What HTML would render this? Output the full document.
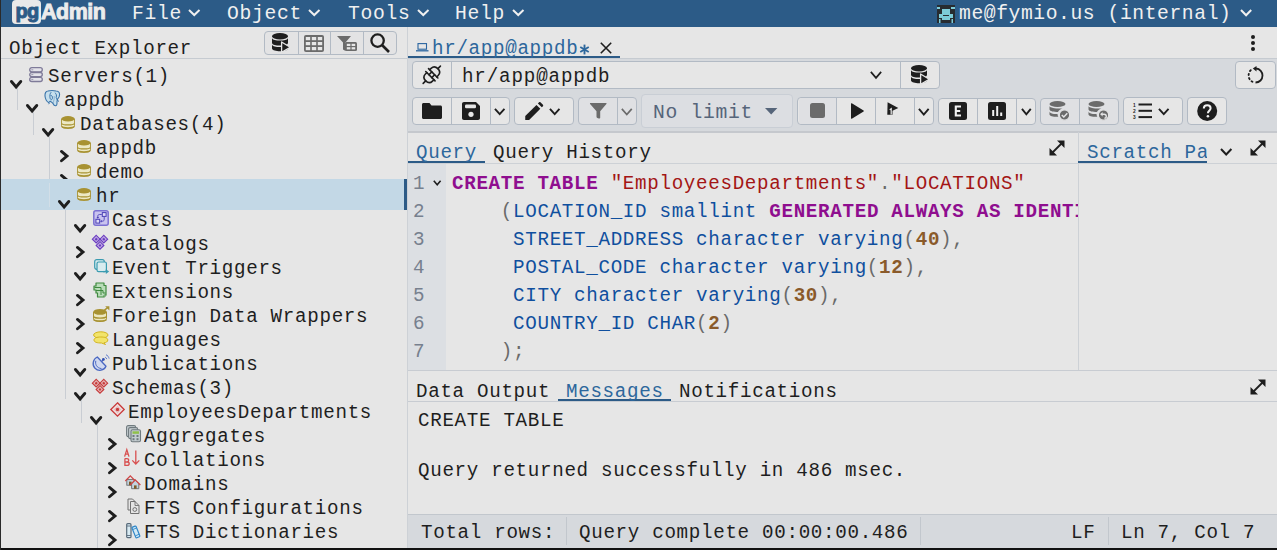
<!DOCTYPE html>
<html><head><meta charset="utf-8"><style>
html,body{margin:0;padding:0;}
body{width:1277px;height:550px;overflow:hidden;position:relative;background:#111;font-family:"Liberation Mono",monospace;}
.a{position:absolute;}
.t{position:absolute;font-family:"Liberation Mono",monospace;font-size:20.5px;letter-spacing:0.72px;white-space:pre;height:24px;line-height:24px;color:#1e1e1e;transform-origin:0 0;transform:scaleX(0.937);}
.bg{position:absolute;border:1px solid #b2bac4;border-radius:4px;background:#e3e3e4;box-sizing:border-box;}
.dv{position:absolute;top:0;bottom:0;width:1px;background:#b2bac4;}
svg{position:absolute;overflow:visible;}
</style></head><body>
<div class="a" style="left:1px;top:0px;width:1276px;height:27px;background:#2c5b87;"></div>
<div class="a" style="left:12px;top:-0.5px;width:29px;height:24.2px;background:#e9e9e9;border-radius:4px;"></div>
<div class="a" style="left:15.6px;top:-1.5px;font-family:'Liberation Sans',sans-serif;font-weight:bold;font-size:20px;line-height:24px;color:#2c5b87;letter-spacing:-0.9px;-webkit-text-stroke:1px #2c5b87;">pg</div>
<div class="a" style="left:41px;top:0px;font-family:'Liberation Sans',sans-serif;font-weight:bold;font-size:21.5px;line-height:24px;color:#ececec;letter-spacing:-0.5px;-webkit-text-stroke:0.9px #ececec;">Admin</div>
<div class="t" style="left:131.60px;top:2.00px;font-size:21px;letter-spacing:0.740px;top:1.87px;color:#f0f0f0;">File</div>
<svg style="left:188px;top:9px" width="12.5" height="7"><path d="M1.0 1.0 L6.25 6.0 L11.5 1.0" fill="none" stroke="#f0f0f0" stroke-width="2" stroke-linecap="butt" stroke-linejoin="miter"/></svg>
<div class="t" style="left:227.00px;top:2.00px;font-size:21px;letter-spacing:0.740px;top:1.87px;color:#f0f0f0;">Object</div>
<svg style="left:308px;top:9px" width="12.5" height="7"><path d="M1.0 1.0 L6.25 6.0 L11.5 1.0" fill="none" stroke="#f0f0f0" stroke-width="2" stroke-linecap="butt" stroke-linejoin="miter"/></svg>
<div class="t" style="left:347.60px;top:2.00px;font-size:21px;letter-spacing:0.740px;top:1.87px;color:#f0f0f0;">Tools</div>
<svg style="left:416.5px;top:9px" width="12.5" height="7"><path d="M1.0 1.0 L6.25 6.0 L11.5 1.0" fill="none" stroke="#f0f0f0" stroke-width="2" stroke-linecap="butt" stroke-linejoin="miter"/></svg>
<div class="t" style="left:454.50px;top:2.00px;font-size:21px;letter-spacing:0.740px;top:1.87px;color:#f0f0f0;">Help</div>
<svg style="left:511.5px;top:9px" width="12.5" height="7"><path d="M1.0 1.0 L6.25 6.0 L11.5 1.0" fill="none" stroke="#f0f0f0" stroke-width="2" stroke-linecap="butt" stroke-linejoin="miter"/></svg>
<svg style="left:937px;top:5px" width="18" height="18"><rect width="18" height="18" fill="#272c31"/><rect x="0" y="2" width="3" height="2" fill="#7ccbd8"/><rect x="14" y="2" width="4" height="2" fill="#7ccbd8"/><rect x="5" y="4" width="8" height="6" fill="#7ccbd8"/><rect x="2" y="9" width="14" height="4" fill="#7ccbd8"/><rect x="5" y="13" width="8" height="2" fill="#7ccbd8"/><rect x="2" y="14" width="1.5" height="4" fill="#7ccbd8"/><rect x="14.5" y="14" width="1.5" height="4" fill="#7ccbd8"/><rect x="6" y="10" width="6" height="1" fill="#272c31"/></svg>
<div class="t" style="left:958.50px;top:2.00px;font-size:21px;letter-spacing:0.612px;top:1.87px;color:#f0f0f0;">me@fymio.us (internal)</div>
<svg style="left:1239.5px;top:9.3px" width="12.2" height="7.2"><path d="M1.0 1.0 L6.1 6.2 L11.2 1.0" fill="none" stroke="#f0f0f0" stroke-width="2" stroke-linecap="butt" stroke-linejoin="miter"/></svg>
<div class="a" style="left:1px;top:27px;width:406px;height:521px;background:#e6e6e6;"></div>
<div class="a" style="left:407px;top:27px;width:1px;height:521px;background:#cdd1d6;"></div>
<div class="a" style="left:1px;top:58px;width:406px;height:1px;background:#c6cbd1;"></div>
<div class="t" style="left:9.00px;top:36.60px;">Object Explorer</div>
<div class="bg" style="left:264px;top:31px;width:133px;height:24px;"><div class="dv" style="left:32.5px"></div><div class="dv" style="left:65px"></div><div class="dv" style="left:98px"></div></div>
<svg style="left:271.7px;top:33.4px" width="19" height="20" viewBox="0 0 19 20"><ellipse cx="8" cy="3.2" rx="8" ry="3.2" fill="#1e1e1e"/><path d="M0 5 C0.6 6.9 4 7.6 8 7.6 C12 7.6 15.4 6.9 16 5 V10 C15.4 11.9 12 12.6 8 12.6 C4 12.6 0.6 11.9 0 10 Z" fill="#1e1e1e"/><path d="M0 11.4 C0.6 13.3 4 14 8 14 C12 14 15.4 13.3 16 11.4 V15.6 C15.4 17.5 12 18.3 8 18.3 C4 18.3 0.6 17.5 0 15.6 Z" fill="#1e1e1e"/><path d="M9.6 9 L18.2 14.2 L9.6 19.4 Z" fill="#1e1e1e" stroke="#e6e6e6" stroke-width="1.3" stroke-linejoin="round"/></svg>
<svg style="left:304px;top:35px" width="20" height="17" viewBox="0 0 20 17"><rect x="0" y="0" width="20" height="17" rx="2" fill="#6b6b6b"/><rect x="1.8" y="2" width="4.4" height="3.2" fill="#e6e6e6"/><rect x="7.8" y="2" width="4.4" height="3.2" fill="#e6e6e6"/><rect x="13.8" y="2" width="4.4" height="3.2" fill="#e6e6e6"/><rect x="1.8" y="7" width="4.4" height="3.2" fill="#e6e6e6"/><rect x="7.8" y="7" width="4.4" height="3.2" fill="#e6e6e6"/><rect x="13.8" y="7" width="4.4" height="3.2" fill="#e6e6e6"/><rect x="1.8" y="12" width="4.4" height="3.2" fill="#e6e6e6"/><rect x="7.8" y="12" width="4.4" height="3.2" fill="#e6e6e6"/><rect x="13.8" y="12" width="4.4" height="3.2" fill="#e6e6e6"/></svg>
<svg style="left:337.1px;top:35.6px" width="20" height="15" viewBox="0 0 20 15"><path d="M0 0 H14 L8.5 6.5 V15 L6 13.5 V6.5 Z" fill="#6b6b6b"/><rect x="8" y="6" width="12" height="9" rx="1.5" fill="#6b6b6b"/><g fill="#e6e6e6"><rect x="9.8" y="7.8" width="3.6" height="2.2"/><rect x="14.6" y="7.8" width="3.6" height="2.2"/><rect x="9.8" y="11.2" width="3.6" height="2.2"/><rect x="14.6" y="11.2" width="3.6" height="2.2"/></g></svg>
<svg style="left:369.6px;top:32.9px" width="20" height="20" viewBox="0 0 20 20"><circle cx="7.6" cy="7.6" r="6.2" fill="none" stroke="#1e1e1e" stroke-width="2.3"/><path d="M12 12 L19 19" stroke="#1e1e1e" stroke-width="2.6"/></svg>
<div class="t" style="left:47.50px;top:64.50px;">Servers(1)</div>
<svg style="left:9.9px;top:79.7px" width="12.2" height="8.4"><path d="M1.45 1.45 L6.1 6.95 L10.75 1.45" fill="none" stroke="#1e1e1e" stroke-width="2.9" stroke-linecap="round" stroke-linejoin="miter"/></svg>
<svg style="left:29.2px;top:66.8px" width="14" height="15" viewBox="0 0 14 15"><rect x="0.7" y="0.7" width="12.6" height="4.2" rx="2.1" fill="#e4e3ea" stroke="#7f7b99" stroke-width="1.3"/><rect x="2.3" y="2.3" width="2" height="1" fill="#9d9ab2"/><rect x="0.7" y="5.5" width="12.6" height="4.2" rx="2.1" fill="#e4e3ea" stroke="#7f7b99" stroke-width="1.3"/><rect x="2.3" y="7.1" width="2" height="1" fill="#9d9ab2"/><rect x="0.7" y="10.299999999999999" width="12.6" height="4.2" rx="2.1" fill="#e4e3ea" stroke="#7f7b99" stroke-width="1.3"/><rect x="2.3" y="11.899999999999999" width="2" height="1" fill="#9d9ab2"/></svg>
<div class="t" style="left:63.50px;top:88.50px;">appdb</div>
<svg style="left:25.9px;top:103.7px" width="12.2" height="8.4"><path d="M1.45 1.45 L6.1 6.95 L10.75 1.45" fill="none" stroke="#1e1e1e" stroke-width="2.9" stroke-linecap="round" stroke-linejoin="miter"/></svg>
<svg style="left:44px;top:90.0px" width="16" height="16" viewBox="0 0 16 16"><path d="M4 1 C2 1 0.8 3 1 6 C1.3 9 2.8 11.5 4.6 12.6 L6.2 11.2 C7.2 11.8 8.2 12.4 9 13.5 C9.6 15 10.5 15.9 11.8 15.8 C12.9 15.5 13.1 13.6 13 11.5 L13.6 9 C14.8 8 15.6 6.5 15.6 4.5 C15.6 2.4 14 1 12 1 C10 0.5 6 0.5 4 1 Z" fill="#c6dfed" stroke="#3a74aa" stroke-width="1.1"/><path d="M7.2 2.2 C6 3.2 5.6 5.8 6 7.8 C6.4 10 8 10.4 8.4 8.4 C8.7 6.6 7.8 5 6.6 5.6" fill="none" stroke="#3a74aa" stroke-width="1"/><path d="M10.8 2.6 C12.4 3.6 12.8 5.6 12.2 7.4 C12.6 9.2 13.6 10.6 15 11.6" fill="none" stroke="#3a74aa" stroke-width="1"/><path d="M9 13.5 C9.6 11 10.5 9 10.2 6" fill="none" stroke="#3a74aa" stroke-width="0.7" opacity="0.6"/><path d="M5.6 12.8 L4.6 14.2" stroke="#3a74aa" stroke-width="1"/></svg>
<div class="t" style="left:79.50px;top:112.50px;">Databases(4)</div>
<svg style="left:41.9px;top:127.7px" width="12.2" height="8.4"><path d="M1.45 1.45 L6.1 6.95 L10.75 1.45" fill="none" stroke="#1e1e1e" stroke-width="2.9" stroke-linecap="round" stroke-linejoin="miter"/></svg>
<svg style="left:61.1px;top:115.5px" width="14" height="13" viewBox="0 0 14 13"><path d="M0.5 3 V9.8 C0.5 11.5 3.6 12.5 7 12.5 C10.4 12.5 13.5 11.5 13.5 9.8 V3 Z" fill="#ece8c4" stroke="#a89232" stroke-width="0.9"/><ellipse cx="7" cy="2.8" rx="6.6" ry="2.7" fill="#a89232"/><path d="M0.6 7.4 C1.6 9.4 12.4 9.4 13.4 7.4" fill="none" stroke="#a89232" stroke-width="1.15"/><path d="M0.6 10.4 C1.6 12.4 12.4 12.4 13.4 10.4" fill="none" stroke="#a89232" stroke-width="1.3"/></svg>
<div class="t" style="left:95.50px;top:136.50px;">appdb</div>
<svg style="left:59.9px;top:149.7px" width="8.4" height="12.2"><path d="M1.45 1.45 L6.95 6.1 L1.45 10.75" fill="none" stroke="#1e1e1e" stroke-width="2.9" stroke-linecap="round"/></svg>
<svg style="left:77.1px;top:139.5px" width="14" height="13" viewBox="0 0 14 13"><path d="M0.5 3 V9.8 C0.5 11.5 3.6 12.5 7 12.5 C10.4 12.5 13.5 11.5 13.5 9.8 V3 Z" fill="#ece8c4" stroke="#a89232" stroke-width="0.9"/><ellipse cx="7" cy="2.8" rx="6.6" ry="2.7" fill="#a89232"/><path d="M0.6 7.4 C1.6 9.4 12.4 9.4 13.4 7.4" fill="none" stroke="#a89232" stroke-width="1.15"/><path d="M0.6 10.4 C1.6 12.4 12.4 12.4 13.4 10.4" fill="none" stroke="#a89232" stroke-width="1.3"/></svg>
<div class="t" style="left:95.50px;top:160.50px;">demo</div>
<svg style="left:59.9px;top:173.7px" width="8.4" height="12.2"><path d="M1.45 1.45 L6.95 6.1 L1.45 10.75" fill="none" stroke="#1e1e1e" stroke-width="2.9" stroke-linecap="round"/></svg>
<svg style="left:77.1px;top:163.5px" width="14" height="13" viewBox="0 0 14 13"><path d="M0.5 3 V9.8 C0.5 11.5 3.6 12.5 7 12.5 C10.4 12.5 13.5 11.5 13.5 9.8 V3 Z" fill="#ece8c4" stroke="#a89232" stroke-width="0.9"/><ellipse cx="7" cy="2.8" rx="6.6" ry="2.7" fill="#a89232"/><path d="M0.6 7.4 C1.6 9.4 12.4 9.4 13.4 7.4" fill="none" stroke="#a89232" stroke-width="1.15"/><path d="M0.6 10.4 C1.6 12.4 12.4 12.4 13.4 10.4" fill="none" stroke="#a89232" stroke-width="1.3"/></svg>
<div class="t" style="left:95.50px;top:184.50px;">hr</div>
<svg style="left:57.9px;top:199.7px" width="12.2" height="8.4"><path d="M1.45 1.45 L6.1 6.95 L10.75 1.45" fill="none" stroke="#1e1e1e" stroke-width="2.9" stroke-linecap="round" stroke-linejoin="miter"/></svg>
<svg style="left:77.1px;top:187.5px" width="14" height="13" viewBox="0 0 14 13"><path d="M0.5 3 V9.8 C0.5 11.5 3.6 12.5 7 12.5 C10.4 12.5 13.5 11.5 13.5 9.8 V3 Z" fill="#ece8c4" stroke="#a89232" stroke-width="0.9"/><ellipse cx="7" cy="2.8" rx="6.6" ry="2.7" fill="#a89232"/><path d="M0.6 7.4 C1.6 9.4 12.4 9.4 13.4 7.4" fill="none" stroke="#a89232" stroke-width="1.15"/><path d="M0.6 10.4 C1.6 12.4 12.4 12.4 13.4 10.4" fill="none" stroke="#a89232" stroke-width="1.3"/></svg>
<div class="t" style="left:111.50px;top:208.50px;">Casts</div>
<svg style="left:73.9px;top:223.7px" width="12.2" height="8.4"><path d="M1.45 1.45 L6.1 6.95 L10.75 1.45" fill="none" stroke="#1e1e1e" stroke-width="2.9" stroke-linecap="round" stroke-linejoin="miter"/></svg>
<svg style="left:92.9px;top:209.9px" width="16" height="16" viewBox="0 0 16 16"><rect x="0.8" y="0.8" width="14.4" height="14.4" rx="2" fill="#c9c3ef" stroke="#7b70d2" stroke-width="1.5"/><rect x="9.3" y="2.6" width="3.8" height="3.8" fill="#ddd9f6" stroke="#4a3fb5" stroke-width="1"/><rect x="2.9" y="9.3" width="3.8" height="3.8" fill="#ddd9f6" stroke="#4a3fb5" stroke-width="1"/><path d="M8.8 4.5 H6.4 C5.4 4.5 4.8 5.2 4.8 6.2 V7.4" fill="none" stroke="#4a3fb5" stroke-width="0.9"/><path d="M3.5 7 L4.8 8.8 L6.1 7 Z" fill="#4a3fb5"/><path d="M11.2 6.9 V9.4 C11.2 10.4 10.6 11.2 9.6 11.2 H8.4" fill="none" stroke="#4a3fb5" stroke-width="0.9"/><path d="M8.8 9.9 L7 11.2 L8.8 12.5 Z" fill="#4a3fb5"/></svg>
<div class="t" style="left:111.50px;top:232.50px;">Catalogs</div>
<svg style="left:75.9px;top:245.7px" width="8.4" height="12.2"><path d="M1.45 1.45 L6.95 6.1 L1.45 10.75" fill="none" stroke="#1e1e1e" stroke-width="2.9" stroke-linecap="round"/></svg>
<svg style="left:92px;top:234.5px" width="16" height="15" viewBox="0 0 16 15"><path d="M4.2 0.40000000000000036 L8.0 4.2 L4.2 8.0 L0.40000000000000036 4.2 Z" fill="#ddd0f0" stroke="#6a3cc0" stroke-width="1.2"/><path d="M4.2 2.1 L6.300000000000001 4.2 L4.2 6.300000000000001 L2.1 4.2 Z" fill="none" stroke="#6a3cc0" stroke-width="0.7" opacity="0.55"/><circle cx="4.2" cy="4.2" r="1.2" fill="#6a3cc0"/><path d="M11.8 0.40000000000000036 L15.600000000000001 4.2 L11.8 8.0 L8.0 4.2 Z" fill="#ddd0f0" stroke="#6a3cc0" stroke-width="1.2"/><path d="M11.8 2.1 L13.9 4.2 L11.8 6.300000000000001 L9.700000000000001 4.2 Z" fill="none" stroke="#6a3cc0" stroke-width="0.7" opacity="0.55"/><circle cx="11.8" cy="4.2" r="1.2" fill="#6a3cc0"/><path d="M8 6.6000000000000005 L11.8 10.4 L8 14.2 L4.2 10.4 Z" fill="#ddd0f0" stroke="#6a3cc0" stroke-width="1.2"/><path d="M8 8.3 L10.1 10.4 L8 12.5 L5.9 10.4 Z" fill="none" stroke="#6a3cc0" stroke-width="0.7" opacity="0.55"/><circle cx="8" cy="10.4" r="1.2" fill="#6a3cc0"/><circle cx="8" cy="4.3" r="0.9" fill="#6a3cc0"/></svg>
<div class="t" style="left:111.50px;top:256.50px;">Event Triggers</div>
<svg style="left:73.9px;top:271.7px" width="12.2" height="8.4"><path d="M1.45 1.45 L6.1 6.95 L10.75 1.45" fill="none" stroke="#1e1e1e" stroke-width="2.9" stroke-linecap="round" stroke-linejoin="miter"/></svg>
<svg style="left:93.8px;top:258.8px" width="16" height="16" viewBox="0 0 16 16"><rect x="0.7" y="0.7" width="9.6" height="9.6" rx="2" fill="#d8ecef" stroke="#3a9bb0" stroke-width="1.2"/><rect x="3" y="3" width="9.4" height="9.6" rx="1.6" fill="#d8ecef" stroke="#3a9bb0" stroke-width="1.2"/><path d="M9 12.6 H12.2" stroke="#3a9bb0" stroke-width="1.3"/><path d="M11.8 10.2 L15.2 12.6 L11.8 15 Z" fill="#3a9bb0"/></svg>
<div class="t" style="left:111.50px;top:280.50px;">Extensions</div>
<svg style="left:75.9px;top:293.7px" width="8.4" height="12.2"><path d="M1.45 1.45 L6.95 6.1 L1.45 10.75" fill="none" stroke="#1e1e1e" stroke-width="2.9" stroke-linecap="round"/></svg>
<svg style="left:92.9px;top:281.9px" width="15" height="16" viewBox="0 0 15 16"><path d="M3 1 H11 V3.5 H13 V13 L11 15 H4.5 V11 H3 V8 H1 V4 H3 Z" fill="#b9dcb9" stroke="#3f8a3f" stroke-width="1.2" stroke-linejoin="round"/><path d="M1.5 5.5 H8 M3 8.5 H10 M8 5.5 V13 M10 8.5 V11 H12.5" fill="none" stroke="#3f8a3f" stroke-width="1"/><path d="M11 15 V13 H13" fill="#e6f2e6" stroke="#3f8a3f" stroke-width="0.8"/></svg>
<div class="t" style="left:111.50px;top:304.50px;">Foreign Data Wrappers</div>
<svg style="left:75.9px;top:317.7px" width="8.4" height="12.2"><path d="M1.45 1.45 L6.95 6.1 L1.45 10.75" fill="none" stroke="#1e1e1e" stroke-width="2.9" stroke-linecap="round"/></svg>
<svg style="left:93px;top:305.5px" width="17" height="16" viewBox="0 0 17 16"><g transform="translate(0 3)"><path d="M0.5 3 V9.8 C0.5 11.5 3.6 12.5 7 12.5 C10.4 12.5 13.5 11.5 13.5 9.8 V3 Z" fill="#ebe7bf" stroke="#a89232" stroke-width="1"/><ellipse cx="7" cy="2.9" rx="6.7" ry="2.9" fill="#a89232"/><path d="M0.7 7.6 C1.6 9.6 12.4 9.6 13.3 7.6" fill="none" stroke="#a89232" stroke-width="1.4"/><path d="M0.7 10.6 C1.6 12.5 12.4 12.5 13.3 10.6" fill="none" stroke="#a89232" stroke-width="1.4"/></g><path d="M10.5 5 L14.6 1.6" stroke="#a89232" stroke-width="1.5"/><path d="M12.2 0.2 H16.4 V4.4 Z" fill="#a89232"/></svg>
<div class="t" style="left:111.50px;top:328.50px;">Languages</div>
<svg style="left:75.9px;top:341.7px" width="8.4" height="12.2"><path d="M1.45 1.45 L6.95 6.1 L1.45 10.75" fill="none" stroke="#1e1e1e" stroke-width="2.9" stroke-linecap="round"/></svg>
<svg style="left:93px;top:331.2px" width="16" height="14" viewBox="0 0 16 14"><ellipse cx="7.8" cy="4" rx="7.2" ry="3.2" fill="#f2e46a" stroke="#d2b420" stroke-width="1"/><path d="M1 9 C1 6.8 4 6 7.8 6 C11.6 6 14.8 6.8 14.8 9 C14.8 10.8 13 11.6 11 11.8 L12.5 13.5 L8.5 12 C4 12 1 11.2 1 9Z" fill="#f2e46a" stroke="#d2b420" stroke-width="1"/></svg>
<div class="t" style="left:111.50px;top:352.50px;">Publications</div>
<svg style="left:73.9px;top:367.7px" width="12.2" height="8.4"><path d="M1.45 1.45 L6.1 6.95 L10.75 1.45" fill="none" stroke="#1e1e1e" stroke-width="2.9" stroke-linecap="round" stroke-linejoin="miter"/></svg>
<svg style="left:92px;top:353.0px" width="18" height="18" viewBox="0 0 18 18"><path d="M5.3 4 C1 6 -0.3 12 3 15.3 C6.3 18.6 12 17.8 14 13.3 Z" fill="#d0d9f0" stroke="#4a68c2" stroke-width="1.3" stroke-linejoin="round"/><path d="M3.8 7.8 C3 11 4.5 15 9.5 15.6" fill="none" stroke="#4a68c2" stroke-width="1"/><path d="M9.6 8.7 L11.2 6.8" stroke="#4a68c2" stroke-width="1.3"/><circle cx="11.4" cy="6.4" r="1.4" fill="#3552b0"/><path d="M13.2 4.2 C14.1 4.6 14.5 5.2 14.7 6.1 M14 1.8 C15.7 2.4 16.7 3.8 17.1 5.6" fill="none" stroke="#5a78cc" stroke-width="1"/></svg>
<div class="t" style="left:111.50px;top:376.50px;">Schemas(3)</div>
<svg style="left:73.9px;top:391.7px" width="12.2" height="8.4"><path d="M1.45 1.45 L6.1 6.95 L10.75 1.45" fill="none" stroke="#1e1e1e" stroke-width="2.9" stroke-linecap="round" stroke-linejoin="miter"/></svg>
<svg style="left:92px;top:378.5px" width="16" height="15" viewBox="0 0 16 15"><path d="M4.2 0.40000000000000036 L8.0 4.2 L4.2 8.0 L0.40000000000000036 4.2 Z" fill="#f0dcdc" stroke="#c63a3a" stroke-width="1.2"/><path d="M4.2 2.1 L6.300000000000001 4.2 L4.2 6.300000000000001 L2.1 4.2 Z" fill="none" stroke="#c63a3a" stroke-width="0.7" opacity="0.55"/><circle cx="4.2" cy="4.2" r="1.2" fill="#c63a3a"/><path d="M11.8 0.40000000000000036 L15.600000000000001 4.2 L11.8 8.0 L8.0 4.2 Z" fill="#f0dcdc" stroke="#c63a3a" stroke-width="1.2"/><path d="M11.8 2.1 L13.9 4.2 L11.8 6.300000000000001 L9.700000000000001 4.2 Z" fill="none" stroke="#c63a3a" stroke-width="0.7" opacity="0.55"/><circle cx="11.8" cy="4.2" r="1.2" fill="#c63a3a"/><path d="M8 6.6000000000000005 L11.8 10.4 L8 14.2 L4.2 10.4 Z" fill="#f0dcdc" stroke="#c63a3a" stroke-width="1.2"/><path d="M8 8.3 L10.1 10.4 L8 12.5 L5.9 10.4 Z" fill="none" stroke="#c63a3a" stroke-width="0.7" opacity="0.55"/><circle cx="8" cy="10.4" r="1.2" fill="#c63a3a"/><circle cx="8" cy="4.3" r="0.9" fill="#c63a3a"/></svg>
<div class="t" style="left:127.50px;top:400.50px;">EmployeesDepartments</div>
<svg style="left:89.9px;top:415.7px" width="12.2" height="8.4"><path d="M1.45 1.45 L6.1 6.95 L10.75 1.45" fill="none" stroke="#1e1e1e" stroke-width="2.9" stroke-linecap="round" stroke-linejoin="miter"/></svg>
<svg style="left:109.8px;top:402.4px" width="15" height="15" viewBox="0 0 15 15"><path d="M7.5 0.8 L14.2 7.5 L7.5 14.2 L0.8 7.5 Z" fill="#ecdcdc" stroke="#c93838" stroke-width="1.3"/><path d="M7.5 4.5 L10.5 7.5 L7.5 10.5 L4.5 7.5 Z" fill="none" stroke="#e8a8a8" stroke-width="0.8"/><circle cx="7.5" cy="7.5" r="1.7" fill="#c93838"/></svg>
<div class="t" style="left:143.50px;top:424.50px;">Aggregates</div>
<svg style="left:107.9px;top:437.7px" width="8.4" height="12.2"><path d="M1.45 1.45 L6.95 6.1 L1.45 10.75" fill="none" stroke="#1e1e1e" stroke-width="2.9" stroke-linecap="round"/></svg>
<svg style="left:125.8px;top:425.2px" width="15" height="18" viewBox="0 0 15 18"><rect x="0.6" y="0.6" width="9" height="11" rx="1.5" fill="#c9d0d4" stroke="#6f7a7e" stroke-width="1.1"/><rect x="2.6" y="2.6" width="9" height="11" rx="1.5" fill="#c9d0d4" stroke="#6f7a7e" stroke-width="1.1"/><rect x="5" y="4.8" width="9.5" height="12" rx="1.5" fill="#c3ccd0" stroke="#6f7a7e" stroke-width="1.1"/><rect x="6.5" y="6.3" width="6.5" height="2.5" fill="#8fc04a"/><g fill="#6f7a7e"><rect x="6.5" y="10" width="2" height="2"/><rect x="10.5" y="10" width="2" height="2"/><rect x="6.5" y="13.2" width="2" height="2"/><rect x="10.5" y="13.2" width="2" height="2"/></g></svg>
<div class="t" style="left:143.50px;top:448.50px;">Collations</div>
<svg style="left:107.9px;top:461.7px" width="8.4" height="12.2"><path d="M1.45 1.45 L6.95 6.1 L1.45 10.75" fill="none" stroke="#1e1e1e" stroke-width="2.9" stroke-linecap="round"/></svg>
<svg style="left:124.4px;top:449.0px" width="16" height="17" viewBox="0 0 16 17"><path d="M0.6 7.6 L2.8 0.6 L5 7.6 M1.4 5.2 H4.2" fill="none" stroke="#d85050" stroke-width="1.3"/><path d="M0.9 9.6 V16.4 H3.1 C4.6 16.4 5.2 15.7 5.2 14.7 C5.2 13.7 4.5 13 3.1 13 H0.9 M0.9 9.6 H2.9 C4.1 9.6 4.7 10.3 4.7 11.3 C4.7 12.3 4.1 13 2.9 13" fill="none" stroke="#d85050" stroke-width="1.3"/><path d="M11.8 1.5 V15 M8.3 11.4 L11.8 15 L15.3 11.4" fill="none" stroke="#d85050" stroke-width="1.3"/></svg>
<div class="t" style="left:143.50px;top:472.50px;">Domains</div>
<svg style="left:107.9px;top:485.7px" width="8.4" height="12.2"><path d="M1.45 1.45 L6.95 6.1 L1.45 10.75" fill="none" stroke="#1e1e1e" stroke-width="2.9" stroke-linecap="round"/></svg>
<svg style="left:124.5px;top:474.8px" width="16" height="14" viewBox="0 0 16 14"><rect x="1.8" y="4.6" width="7.4" height="5.6" fill="#c2d2de" stroke="#6a6a6a" stroke-width="0.9"/><rect x="4" y="6.6" width="2.6" height="3.6" fill="#7d5a26"/><path d="M0.3 6 L5.3 0.8 L10.3 6" fill="none" stroke="#d04444" stroke-width="1.2"/><path d="M6.6 8.6 L10.2 5.2 L13.8 8.6 V13.7 H6.6 Z" fill="#c2d2de" stroke="#6a6a6a" stroke-width="0.9"/><rect x="9" y="10.4" width="2.6" height="3.3" fill="#7d5a26"/><path d="M5.2 10 L10.2 4.8 L15.4 10" fill="none" stroke="#d04444" stroke-width="1.2"/></svg>
<div class="t" style="left:143.50px;top:496.50px;">FTS Configurations</div>
<svg style="left:107.9px;top:509.7px" width="8.4" height="12.2"><path d="M1.45 1.45 L6.95 6.1 L1.45 10.75" fill="none" stroke="#1e1e1e" stroke-width="2.9" stroke-linecap="round"/></svg>
<svg style="left:127.4px;top:497.9px" width="13" height="16" viewBox="0 0 13 16"><path d="M1 1 H5.5 L8 3.5 V12 H1 Z" fill="#e4e4e4" stroke="#707070" stroke-width="1"/><path d="M3.5 3.5 H8 L12 7.5 V15.5 H3.5 Z" fill="#e4e4e4" stroke="#707070" stroke-width="1"/><path d="M8 3.5 V7.5 H12" fill="none" stroke="#707070" stroke-width="0.9"/><circle cx="7.8" cy="11.5" r="1.9" fill="none" stroke="#707070" stroke-width="1"/></svg>
<div class="t" style="left:143.50px;top:520.50px;">FTS Dictionaries</div>
<svg style="left:107.9px;top:533.7px" width="8.4" height="12.2"><path d="M1.45 1.45 L6.95 6.1 L1.45 10.75" fill="none" stroke="#1e1e1e" stroke-width="2.9" stroke-linecap="round"/></svg>
<svg style="left:125.9px;top:522.5px" width="15" height="16" viewBox="0 0 15 16"><rect x="0.7" y="0.7" width="4.3" height="14" rx="1" fill="#d8eaf2" stroke="#586a7a" stroke-width="1.2"/><path d="M1 3 H4.8 M1 12.5 H4.8" stroke="#586a7a" stroke-width="0.9"/><g transform="rotate(-22 10 9)"><rect x="7.8" y="3.2" width="4.3" height="11.5" rx="0.8" fill="#d2eaf6" stroke="#2f86c8" stroke-width="1.2"/><path d="M8 5.5 H12 M8 12.3 H12" stroke="#2f86c8" stroke-width="0.8"/></g></svg>
<div class="a" style="left:17px;top:88px;width:1px;height:22px;background:#c9cdd3;"></div>
<div class="a" style="left:33px;top:112px;width:1px;height:22.5px;background:#c9cdd3;"></div>
<div class="a" style="left:49px;top:136px;width:1px;height:71px;background:#c9cdd3;"></div>
<div class="a" style="left:65px;top:209px;width:1px;height:189.5px;background:#c9cdd3;"></div>
<div class="a" style="left:81px;top:400px;width:1px;height:23px;background:#c9cdd3;"></div>
<div class="a" style="left:97px;top:424px;width:1px;height:124px;background:#c9cdd3;"></div>
<div class="a" style="left:1px;top:179px;width:403px;height:31px;background:#c3d8e6;"></div>
<div class="a" style="left:404px;top:179px;width:3px;height:31px;background:#2c5b87;"></div>
<div class="a" style="left:49px;top:183px;width:1px;height:24px;background:#d2dee7;"></div>
<div class="t" style="left:95.50px;top:184.50px;">hr</div>
<svg style="left:57.9px;top:199.7px" width="12.2" height="8.4"><path d="M1.45 1.45 L6.1 6.95 L10.75 1.45" fill="none" stroke="#1e1e1e" stroke-width="2.9" stroke-linecap="round" stroke-linejoin="miter"/></svg>
<svg style="left:77.1px;top:187.5px" width="14" height="13" viewBox="0 0 14 13"><path d="M0.5 3 V9.8 C0.5 11.5 3.6 12.5 7 12.5 C10.4 12.5 13.5 11.5 13.5 9.8 V3 Z" fill="#ece8c4" stroke="#a89232" stroke-width="0.9"/><ellipse cx="7" cy="2.8" rx="6.6" ry="2.7" fill="#a89232"/><path d="M0.6 7.4 C1.6 9.4 12.4 9.4 13.4 7.4" fill="none" stroke="#a89232" stroke-width="1.15"/><path d="M0.6 10.4 C1.6 12.4 12.4 12.4 13.4 10.4" fill="none" stroke="#a89232" stroke-width="1.3"/></svg>
<div class="a" style="left:408px;top:27px;width:869px;height:521px;background:#e6e6e6;"></div>
<div class="a" style="left:408px;top:58px;width:869px;height:74px;background:#d6d9dd;"></div>
<div class="a" style="left:408px;top:58px;width:869px;height:1px;background:#c6cbd1;"></div>
<div class="a" style="left:408px;top:131px;width:869px;height:2px;background:#c5c8cd;"></div>
<div class="a" style="left:408px;top:56px;width:212px;height:2px;background:#2c5b87;"></div>
<div class="t" style="left:431.80px;top:36.80px;color:#2d679c;">hr/app@appdb</div>
<svg style="left:578.6px;top:44.3px" width="11" height="11" viewBox="0 0 11 11"><g stroke="#2d679c" stroke-width="1.9"><path d="M5.5 0.6 V10.4"/><path d="M1.26 3.05 L9.74 7.95"/><path d="M1.26 7.95 L9.74 3.05"/></g></svg>
<svg style="left:415.9px;top:43px" width="12.5" height="9" viewBox="0 0 12.5 9"><rect x="2" y="0.6" width="8.5" height="5.6" fill="none" stroke="#2a65a0" stroke-width="1.1"/><path d="M0 7.8 H12.5" stroke="#2a65a0" stroke-width="1.3"/></svg>
<svg style="left:600.2px;top:41.9px" width="12" height="12" viewBox="0 0 12 12"><path d="M0.8 0.8 L11.2 11.2 M11.2 0.8 L0.8 11.2" stroke="#1e1e1e" stroke-width="1.6"/></svg>
<div class="a" style="left:1250.9px;top:34.699999999999996px;width:4.2px;height:4.2px;border-radius:50%;background:#1e1e1e;"></div><div class="a" style="left:1250.9px;top:40.8px;width:4.2px;height:4.2px;border-radius:50%;background:#1e1e1e;"></div><div class="a" style="left:1250.9px;top:46.8px;width:4.2px;height:4.2px;border-radius:50%;background:#1e1e1e;"></div><div class="bg" style="left:412.10px;top:61.3px;width:528.30px;height:27.900000000000006px;background:#e6e6e6;"><div class="dv" style="left:38.00px"></div><div class="dv" style="left:486.70px"></div></div>
<div class="t" style="left:461.50px;top:64.70px;font-size:20.5px;letter-spacing:0.902px;">hr/app@appdb</div>
<svg style="left:418px;top:62px" width="28" height="26" viewBox="0 0 28 26"><g transform="translate(13.8 12.75) rotate(-45)" fill="none" stroke="#1e1e1e" stroke-width="1.6" stroke-linecap="round"><path d="M2 -6.6 V6.6 M-2 -6.6 V6.6"/><path d="M2 -5 H4 C7.2 -5 8.6 -2.6 8.6 0 C8.6 2.6 7.2 5 4 5 H2"/><path d="M-2 -5 H-4 C-7.2 -5 -8.6 -2.6 -8.6 0 C-8.6 2.6 -7.2 5 -4 5 H-2"/><path d="M8.6 0 H12.2 M-8.6 0 H-12.2 M-2 -2 H2 M-2 2 H2"/></g></svg>
<svg style="left:870px;top:71.3px" width="12" height="7.7"><path d="M0.85 0.85 L6.0 6.8500000000000005 L11.15 0.85" fill="none" stroke="#1e1e1e" stroke-width="1.7" stroke-linecap="butt" stroke-linejoin="miter"/></svg>
<svg style="left:910.9px;top:65.3px" width="19" height="20" viewBox="0 0 19 20"><ellipse cx="8" cy="3.2" rx="8" ry="3.2" fill="#1e1e1e"/><path d="M0 5 C0.6 6.9 4 7.6 8 7.6 C12 7.6 15.4 6.9 16 5 V10 C15.4 11.9 12 12.6 8 12.6 C4 12.6 0.6 11.9 0 10 Z" fill="#1e1e1e"/><path d="M0 11.4 C0.6 13.3 4 14 8 14 C12 14 15.4 13.3 16 11.4 V15.6 C15.4 17.5 12 18.3 8 18.3 C4 18.3 0.6 17.5 0 15.6 Z" fill="#1e1e1e"/><path d="M9.6 9 L18.2 14.2 L9.6 19.4 Z" fill="#1e1e1e" stroke="#e6e6e6" stroke-width="1.3" stroke-linejoin="round"/></svg>
<div class="bg" style="left:1234.90px;top:61.3px;width:41.00px;height:27.700000000000003px;background:#e6e6e6;"></div>
<svg style="left:1246px;top:66px" width="18" height="18" viewBox="0 0 18 18"><path d="M10 2.5 C14 2.8 16.5 6 16.5 9.5 C16.5 13.5 13.5 16.5 9.5 16.5" fill="none" stroke="#1e1e1e" stroke-width="1.8"/><path d="M6.5 15.8 L5.5 15.2 M3.6 13.2 L3 12 M2.6 9 L2.8 7.8 M4 5 L4.8 4.2" fill="none" stroke="#1e1e1e" stroke-width="1.8" stroke-linecap="round"/><path d="M6.8 2.6 L10.5 0 V5.6 Z" fill="#1e1e1e"/></svg>
<div class="bg" style="left:412.20px;top:97.4px;width:97.80px;height:27.599999999999994px;background:#e6e6e6;"><div class="dv" style="left:37.80px"></div><div class="dv" style="left:76.90px"></div></div>
<svg style="left:422px;top:103px" width="20" height="16" viewBox="0 0 20 16"><path d="M1.5 0 H7.5 L9.5 2.5 H18.5 C19.3 2.5 20 3.2 20 4 V14.5 C20 15.3 19.3 16 18.5 16 H1.5 C0.7 16 0 15.3 0 14.5 V1.5 C0 0.7 0.7 0 1.5 0Z" fill="#1e1e1e"/></svg>
<svg style="left:461.9px;top:102px" width="18" height="18" viewBox="0 0 18 18"><path d="M2 0 H14 L18 4 V16 C18 17.2 17.2 18 16 18 H2 C0.8 18 0 17.2 0 16 V2 C0 0.8 0.8 0 2 0Z" fill="#1e1e1e"/><rect x="3" y="2.5" width="11" height="3.8" rx="1.2" fill="#e6e6e6"/><circle cx="9" cy="12.3" r="2.6" fill="#e6e6e6"/></svg>
<svg style="left:494.2px;top:107.6px" width="11.4" height="7.1"><path d="M0.95 0.95 L5.7 6.1499999999999995 L10.450000000000001 0.95" fill="none" stroke="#1e1e1e" stroke-width="1.9" stroke-linecap="butt" stroke-linejoin="miter"/></svg>
<div class="bg" style="left:514.10px;top:97.4px;width:59.70px;height:27.599999999999994px;background:#e6e6e6;"></div>
<svg style="left:524.8px;top:101.7px" width="19" height="18" viewBox="0 0 19 18.5"><path d="M0 14.5 L11.5 3 L15.5 7 L4 18.5 H0 Z" fill="#1e1e1e"/><path d="M13 1.5 L14.2 0.3 C14.6 -0.1 15.2 -0.1 15.6 0.3 L18.2 2.9 C18.6 3.3 18.6 3.9 18.2 4.3 L17 5.5 Z" fill="#1e1e1e"/></svg>
<svg style="left:548.5px;top:107.6px" width="11.4" height="7.1"><path d="M0.95 0.95 L5.7 6.1499999999999995 L10.450000000000001 0.95" fill="none" stroke="#1e1e1e" stroke-width="1.9" stroke-linecap="butt" stroke-linejoin="miter"/></svg>
<div class="bg" style="left:578.10px;top:97.4px;width:58.60px;height:27.599999999999994px;background:#dfe0e3;"><div class="dv" style="left:37.70px"></div></div>
<svg style="left:590px;top:103px" width="17" height="16" viewBox="0 0 17 16"><path d="M0.5 0 H16 C16.5 0 16.7 0.6 16.4 1 L10.2 8.2 V14.5 C10.2 15.3 9.5 15.6 8.8 15.4 L7.4 15 C6.8 14.8 6.5 14.3 6.5 13.8 V8.2 L0.1 1 C-0.2 0.6 0 0 0.5 0Z" fill="#6b6b6b"/></svg>
<svg style="left:621.2px;top:107.5px" width="11.6" height="7.4"><path d="M0.85 0.85 L5.8 6.550000000000001 L10.75 0.85" fill="none" stroke="#6b6b6b" stroke-width="1.7" stroke-linecap="butt" stroke-linejoin="miter"/></svg>
<div class="bg" style="left:641.20px;top:93.8px;width:151.80px;height:34.3px;background:#dcdee2;border-color:#c9ced5;"></div>
<div class="t" style="left:652.80px;top:101.00px;font-size:21px;letter-spacing:0.740px;top:100.87px;color:#56657a;">No limit</div>
<svg style="left:764.9px;top:108.2px" width="12.4" height="6.4" viewBox="0 0 12.4 6.4"><path d="M0 0 H12.4 L6.2 6.4 Z" fill="#56657a"/></svg>
<div class="bg" style="left:797.10px;top:97.4px;width:136.80px;height:27.599999999999994px;background:#e6e6e6;"><div class="dv" style="left:37.80px"></div><div class="dv" style="left:77.00px"></div><div class="dv" style="left:115.80px"></div></div>
<div class="a" style="left:798.5px;top:98.4px;width:37.4px;height:25.6px;background:#dfe0e3;border-radius:3px 0 0 3px;"></div>
<svg style="left:809.5px;top:103.4px" width="15" height="15" viewBox="0 0 15 15"><rect width="15" height="15" rx="2.5" fill="#6b6b6b"/></svg>
<svg style="left:850.8px;top:102.9px" width="13" height="16" viewBox="0 0 13 16"><path d="M0.8 0.3 L12.6 7.5 C13 7.8 13 8.2 12.6 8.5 L0.8 15.7 C0.4 16 0 15.7 0 15.3 V0.7 C0 0.3 0.4 0 0.8 0.3Z" fill="#1e1e1e"/></svg>
<svg style="left:886.7px;top:102px" width="12" height="13" viewBox="0 0 12 13"><path d="M0.6 0.2 L11.3 6 L5.5 8.8 V12.8 H0.3 Z" fill="#1e1e1e"/><path d="M2.7 7.8 L4.2 6.8 V12.5" fill="none" stroke="#e6e6e6" stroke-width="1.3"/></svg>
<svg style="left:918.2px;top:107.7px" width="11.6" height="7.6"><path d="M0.95 0.95 L5.8 6.6499999999999995 L10.65 0.95" fill="none" stroke="#1e1e1e" stroke-width="1.9" stroke-linecap="butt" stroke-linejoin="miter"/></svg>
<div class="bg" style="left:938.20px;top:97.5px;width:97.60px;height:27.5px;background:#e6e6e6;"><div class="dv" style="left:37.80px"></div><div class="dv" style="left:77.00px"></div></div>
<svg style="left:949px;top:102px" width="18" height="18" viewBox="0 0 18 18"><rect width="18" height="18" rx="2.5" fill="#1e1e1e"/><path d="M12 4.5 H6.8 V13.5 H12 M6.8 9 H11.2" fill="none" stroke="#f2f2f2" stroke-width="2.1"/></svg>
<svg style="left:988px;top:102px" width="18" height="18" viewBox="0 0 18 18"><rect width="18" height="18" rx="2.5" fill="#1e1e1e"/><g fill="#f2f2f2"><rect x="4.2" y="8" width="2" height="6"/><rect x="8.2" y="4" width="2" height="10"/><rect x="12.2" y="10.5" width="2" height="3.5"/></g></svg>
<svg style="left:1020.7px;top:107.8px" width="10.7" height="7.3"><path d="M0.95 0.95 L5.35 6.35 L9.75 0.95" fill="none" stroke="#1e1e1e" stroke-width="1.9" stroke-linecap="butt" stroke-linejoin="miter"/></svg>
<div class="bg" style="left:1040.10px;top:97.5px;width:78.60px;height:27.5px;background:#dfe0e3;"><div class="dv" style="left:37.80px"></div></div>
<svg style="left:1049px;top:101.2px" width="21" height="20" viewBox="0 0 21 20"><ellipse cx="8.5" cy="3" rx="8" ry="3" fill="#6b6b6b"/><path d="M0.5 5 C1 7.6 12 8 14 7.2 C11 8 9.5 9.5 9 11 C5 11 0.8 10.3 0.5 8.5 Z" fill="#6b6b6b"/><path d="M0.5 10.5 C1 12.6 5 13.2 8.5 13 C8.6 14 8.8 15 9.3 15.8 C5 16 0.8 15.3 0.5 13.5 Z" fill="#6b6b6b"/><circle cx="15.5" cy="14" r="5.2" fill="#6b6b6b" stroke="#e3e3e4" stroke-width="1.2"/><path d="M12.8 14 L14.8 16 L18.3 12.3" fill="none" stroke="#e3e3e4" stroke-width="1.5"/></svg>
<svg style="left:1088px;top:101.2px" width="21" height="20" viewBox="0 0 21 20"><ellipse cx="8.5" cy="3" rx="8" ry="3" fill="#6b6b6b"/><path d="M0.5 5 C1 7.6 12 8 14 7.2 C11 8 9.5 9.5 9 11 C5 11 0.8 10.3 0.5 8.5 Z" fill="#6b6b6b"/><path d="M0.5 10.5 C1 12.6 5 13.2 8.5 13 C8.6 14 8.8 15 9.3 15.8 C5 16 0.8 15.3 0.5 13.5 Z" fill="#6b6b6b"/><circle cx="15.5" cy="14" r="5.2" fill="#6b6b6b" stroke="#e3e3e4" stroke-width="1.2"/><path d="M12.8 13.3 H16.2 C17.6 13.3 18.3 14.3 18.3 15.5 C18.3 16.6 17.6 17.3 16.4 17.3" fill="none" stroke="#e3e3e4" stroke-width="1.4"/><path d="M12.3 13.3 L14.6 11 V15.6 Z" fill="#e3e3e4"/></svg>
<div class="bg" style="left:1123.00px;top:97.2px;width:60.10px;height:27.799999999999997px;background:#e6e6e6;"></div>
<svg style="left:1133px;top:103px" width="19" height="16" viewBox="0 0 19 16"><g fill="#1e1e1e"><rect x="5.5" y="0.5" width="13.5" height="2"/><rect x="5.5" y="6.8" width="13.5" height="2"/><rect x="5.5" y="13.1" width="13.5" height="2"/></g><text x="0" y="3.6" font-family="Liberation Sans" font-weight="bold" font-size="4.8" fill="#1e1e1e">1</text><text x="0" y="9.8" font-family="Liberation Sans" font-weight="bold" font-size="4.8" fill="#1e1e1e">2</text><text x="0" y="16" font-family="Liberation Sans" font-weight="bold" font-size="4.8" fill="#1e1e1e">3</text></svg>
<svg style="left:1157.5px;top:107.7px" width="11.5" height="7.1"><path d="M0.95 0.95 L5.75 6.1499999999999995 L10.55 0.95" fill="none" stroke="#1e1e1e" stroke-width="1.9" stroke-linecap="butt" stroke-linejoin="miter"/></svg>
<div class="bg" style="left:1186.60px;top:97.2px;width:40.60px;height:27.799999999999997px;background:#e6e6e6;"></div>
<svg style="left:1196.9px;top:100.9px" width="21" height="20" viewBox="0 0 21 20"><circle cx="10.2" cy="10" r="10" fill="#1e1e1e"/><path d="M6.8 7.6 C6.8 5.5 8.3 4.3 10.2 4.3 C12.2 4.3 13.6 5.5 13.6 7.3 C13.6 9.6 10.9 9.9 10.9 12.2" fill="none" stroke="#f2f2f2" stroke-width="2"/><circle cx="10.9" cy="15.2" r="1.3" fill="#f2f2f2"/></svg>
<div class="a" style="left:408px;top:163px;width:869px;height:1px;background:#cdd1d6;"></div>
<div class="a" style="left:408px;top:164px;width:38px;height:206px;background:#dcdfe3;"></div>
<div class="a" style="left:1078px;top:132px;width:1px;height:238px;background:#cdd1d6;"></div>
<div class="a" style="left:408px;top:370px;width:869px;height:1px;background:#c8ccd2;"></div>
<div class="a" style="left:408px;top:161px;width:77px;height:2px;background:#2c5b87;"></div>
<div class="t" style="left:416.00px;top:141.40px;color:#2d679c;">Query</div>
<div class="t" style="left:493.00px;top:141.40px;">Query History</div>
<div class="a" style="left:1078px;top:161px;width:129px;height:2px;background:#2c5b87;"></div>
<div class="a" style="left:1079px;top:132px;width:128px;height:29px;overflow:hidden;"><div class="t" style="left:8.00px;top:9.40px;color:#2d679c;">Scratch Pad</div>
</div>
<svg style="left:1048.5px;top:140px" width="16" height="16" viewBox="0 0 16 16"><path d="M2.5 13.5 L13.5 2.5" stroke="#1e1e1e" stroke-width="1.8"/><path d="M8 0.5 H15.5 V8 Z" fill="#1e1e1e"/><path d="M0.5 8 V15.5 H8 Z" fill="#1e1e1e"/></svg>
<svg style="left:1219.6px;top:147.5px" width="12.4" height="7.5"><path d="M1.0 1.0 L6.2 6.5 L11.4 1.0" fill="none" stroke="#1e1e1e" stroke-width="2" stroke-linecap="butt" stroke-linejoin="miter"/></svg>
<svg style="left:1249.5px;top:140px" width="16" height="16" viewBox="0 0 16 16"><path d="M2.5 13.5 L13.5 2.5" stroke="#1e1e1e" stroke-width="1.8"/><path d="M8 0.5 H15.5 V8 Z" fill="#1e1e1e"/><path d="M0.5 8 V15.5 H8 Z" fill="#1e1e1e"/></svg>
<svg style="left:1250px;top:378.5px" width="16" height="16" viewBox="0 0 16 16"><path d="M2.5 13.5 L13.5 2.5" stroke="#1e1e1e" stroke-width="1.8"/><path d="M8 0.5 H15.5 V8 Z" fill="#1e1e1e"/><path d="M0.5 8 V15.5 H8 Z" fill="#1e1e1e"/></svg>
<div class="a" style="left:446px;top:164px;width:632px;height:206px;overflow:hidden;"><div class="t" style="left:6.20px;top:8.30px;"><span style="color:#8f0e8f;font-weight:bold">CREATE TABLE</span> <span style="color:#a31515">"EmployeesDepartments"</span><span style="color:#6a6a6a">.</span><span style="color:#a31515">"LOCATIONS"</span></div>
<div class="t" style="left:6.20px;top:36.30px;">    <span style="color:#6a6a6a">(</span><span style="color:#0f4f9e">LOCATION_ID smallint </span><span style="color:#8f0e8f;font-weight:bold">GENERATED ALWAYS AS IDENTITY</span></div>
<div class="t" style="left:6.20px;top:64.30px;">     <span style="color:#0f4f9e">STREET_ADDRESS character varying</span><span style="color:#6a6a6a">(</span><span style="color:#8a5a2a;font-weight:bold">40</span><span style="color:#6a6a6a">),</span></div>
<div class="t" style="left:6.20px;top:92.30px;">     <span style="color:#0f4f9e">POSTAL_CODE character varying</span><span style="color:#6a6a6a">(</span><span style="color:#8a5a2a;font-weight:bold">12</span><span style="color:#6a6a6a">),</span></div>
<div class="t" style="left:6.20px;top:120.30px;">     <span style="color:#0f4f9e">CITY character varying</span><span style="color:#6a6a6a">(</span><span style="color:#8a5a2a;font-weight:bold">30</span><span style="color:#6a6a6a">),</span></div>
<div class="t" style="left:6.20px;top:148.30px;">     <span style="color:#0f4f9e">COUNTRY_ID CHAR</span><span style="color:#6a6a6a">(</span><span style="color:#8a5a2a;font-weight:bold">2</span><span style="color:#6a6a6a">)</span></div>
<div class="t" style="left:6.20px;top:176.30px;">    <span style="color:#6a6a6a">);</span></div>
</div>
<svg style="left:432.8px;top:179.6px" width="8.4" height="5.6"><path d="M0.8 0.8 L4.2 4.8 L7.6000000000000005 0.8" fill="none" stroke="#1e1e1e" stroke-width="1.6" stroke-linecap="butt" stroke-linejoin="miter"/></svg>
<div class="t" style="left:412.50px;top:172.30px;color:#77808e;">1</div>
<div class="t" style="left:412.50px;top:200.30px;color:#77808e;">2</div>
<div class="t" style="left:412.50px;top:228.30px;color:#77808e;">3</div>
<div class="t" style="left:412.50px;top:256.30px;color:#77808e;">4</div>
<div class="t" style="left:412.50px;top:284.30px;color:#77808e;">5</div>
<div class="t" style="left:412.50px;top:312.30px;color:#77808e;">6</div>
<div class="t" style="left:412.50px;top:340.30px;color:#77808e;">7</div>
<div class="a" style="left:408px;top:401px;width:869px;height:1px;background:#c8ccd2;"></div>
<div class="a" style="left:558px;top:399px;width:113px;height:2px;background:#2c5b87;"></div>
<div class="t" style="left:416.00px;top:380.00px;">Data Output</div>
<div class="t" style="left:565.50px;top:380.00px;color:#2d679c;">Messages</div>
<div class="t" style="left:678.50px;top:380.00px;">Notifications</div>
<div class="t" style="left:418.00px;top:409.00px;">CREATE TABLE</div>
<div class="t" style="left:418.00px;top:459.00px;">Query returned successfully in 486 msec.</div>
<div class="a" style="left:408px;top:514px;width:869px;height:34px;background:#d6d9dd;"></div>
<div class="a" style="left:408px;top:514px;width:869px;height:1px;background:#c2c7cd;"></div>
<div class="t" style="left:420.50px;top:520.60px;">Total rows:</div>
<div class="t" style="left:578.50px;top:520.60px;">Query complete 00:00:00.486</div>
<div class="t" style="left:1071.00px;top:520.60px;">LF</div>
<div class="t" style="left:1120.50px;top:520.60px;">Ln 7, Col 7</div>
<div class="a" style="left:566px;top:517px;width:1px;height:28px;background:#c2c7cd;"></div>
<div class="a" style="left:920px;top:517px;width:1px;height:28px;background:#c2c7cd;"></div>
<div class="a" style="left:1108px;top:517px;width:1px;height:28px;background:#c2c7cd;"></div>
<div class="a" style="left:0px;top:548px;width:1277px;height:2px;background:#111;"></div>
<div class="a" style="left:0px;top:0px;width:1px;height:550px;background:#2a2a2a;"></div>
</body></html>
